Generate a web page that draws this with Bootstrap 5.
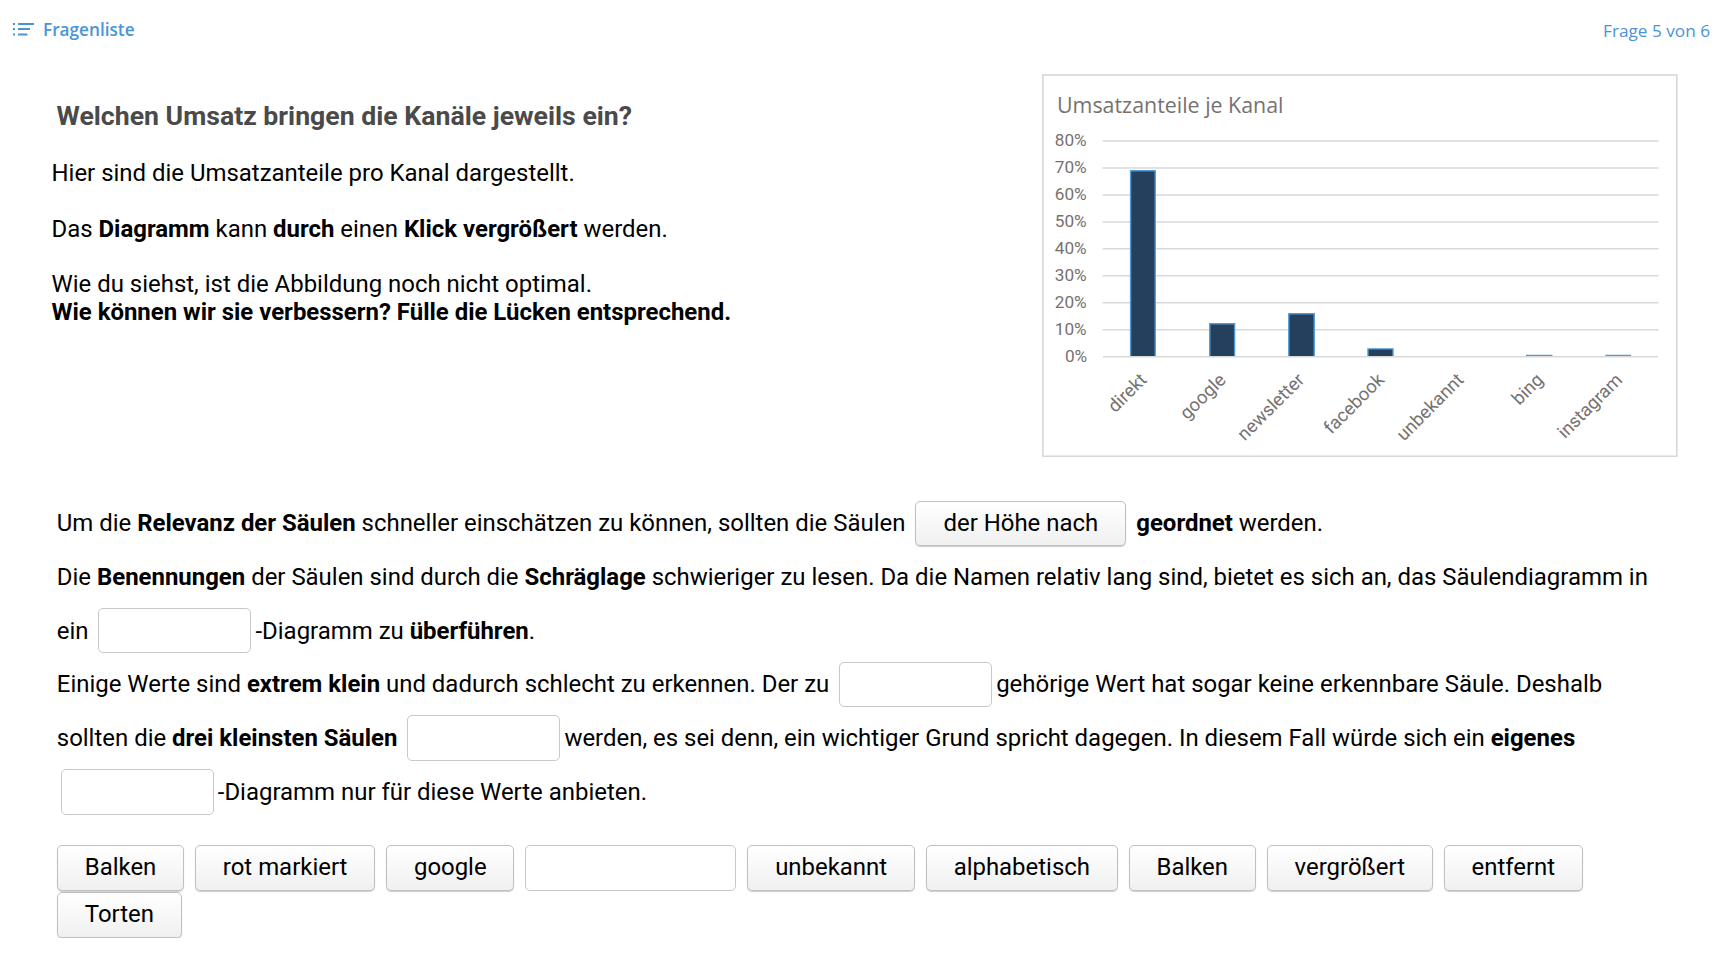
<!DOCTYPE html>
<html lang="de">
<head>
<meta charset="utf-8">
<meta name="viewport" content="width=device-width, initial-scale=1">
<title>Fragenliste</title>
<link href="https://cdn.jsdelivr.net/npm/bootstrap@5.3.0/dist/css/bootstrap.min.css" rel="stylesheet">
<style>
  body { font-family: Roboto, sans-serif; font-size: 23.94px; line-height: 28px; color: #000; background: #fff; }
  strong { font-weight: 700; }
  .topbar { height: 60px; padding: 17px 20px 0 12px; font-family: "Open Sans", sans-serif; font-size: 17.2px; line-height: 26px; }
  .topbar a, .topbar span { color: #4a94d6; }
  .topbar a { font-weight: 600; }
  .topbar svg { margin-top: -2px; }
  .counter { padding-top: 1px; }
  .intro { padding-left: 51.5px; padding-right: 52px; height: 437px; }
  .intro h1 { font-size: 26.65px; line-height: 32px; font-weight: 700; color: #4a4a4a; margin: 40px 0 27px 5px; }
  .intro p { margin-bottom: 27.6px; }
  .chart { margin-top: 14px; width: 636px; height: 383px; }
  .cloze { padding-left: 56.8px; line-height: 53.75px; white-space: nowrap; }
  .gap, .chip { display: inline-flex; align-items: center; justify-content: center; height: 46px; border: 1px solid #c8c8c8; border-radius: 5px; line-height: 44px; vertical-align: middle; background: #fff; }
  .gap { width: 153px; margin: 0 4px; }
  .cloze .chip { margin-bottom: 2px; }
  .cloze .gap { margin-bottom: 3px; }
  .cloze .chip, .cloze .gap { height: 45.5px; }
  .chip { padding: 0 26.75px 2px; border-color: #c0c0c0; background: linear-gradient(#fff, #f0f0f0); box-shadow: 0 1px 1px rgba(0,0,0,.2); white-space: nowrap; }
  .slot-wide { width: 211px; padding: 0 0 2px; }
  .slot-empty { background: #fff; box-shadow: none; border-color: #c8c8c8; }
  .bank { margin: 25px 120px 0 57px; column-gap: 11px; row-gap: 1px; }
</style>
</head>
<body>
<header class="topbar d-flex justify-content-between align-items-start">
  <a href="#" class="d-flex align-items-center text-decoration-none">
    <svg width="23" height="14" viewBox="0 0 23 14" fill="#4a94d6" class="me-2"><path d="M1 1h2v2H1zM6 1h16v2H6zM1 6h2v2H1zM6 6h12v2H6zM1 11.500h2v2H1zM6 11.500h9.500v2H6z"/></svg>
    <span>Fragenliste</span>
  </a>
  <span class="counter">Frage 5 von 6</span>
</header>

<main>
  <section class="intro d-flex justify-content-between align-items-start">
    <div>
      <h1>Welchen Umsatz bringen die Kanäle jeweils ein?</h1>
      <p>Hier sind die Umsatzanteile pro Kanal dargestellt.</p>
      <p>Das <strong>Diagramm</strong> kann <strong>durch</strong> einen <strong>Klick vergrößert</strong> werden.</p>
      <p>Wie du siehst, ist die Abbildung noch nicht optimal.<br><strong>Wie können wir sie verbessern? Fülle die Lücken entsprechend.</strong></p>
    </div>
    <svg class="chart" viewBox="1042 74 636 383" font-family="Roboto, sans-serif" font-size="17.200" fill="#767171">
      <rect x="1042.800" y="75" width="634" height="381.300" fill="#fff" stroke="#d9d9d9" stroke-width="1.700"/>
      <text x="1057" y="112.600" font-family="'Open Sans', sans-serif" font-size="21.500" textLength="226.500" lengthAdjust="spacingAndGlyphs">Umsatzanteile je Kanal</text>
      <path d="M1102.500 141H1658.500M1102.500 168H1658.500M1102.500 195H1658.500M1102.500 222H1658.500M1102.500 248.700H1658.500M1102.500 275.700H1658.500M1102.500 302.700H1658.500M1102.500 329.700H1658.500M1103 356.700H1658" stroke="#d9d9d9" stroke-width="1.600"/>
      <g text-anchor="end">
        <text x="1086.700" y="146">80%</text><text x="1086.700" y="173">70%</text><text x="1086.700" y="200">60%</text>
        <text x="1086.700" y="227">50%</text><text x="1086.700" y="254">40%</text><text x="1086.700" y="281">30%</text>
        <text x="1086.700" y="308">20%</text><text x="1086.700" y="335">10%</text><text x="1087.200" y="362">0%</text>
      </g>
      <g fill="#24405c" stroke="#4f9ad8" stroke-width="1.400">
        <path d="M1130.600 356V170.700H1155.200V356"/>
        <path d="M1209.800 356V323.800H1234.600V356"/>
        <path d="M1288.800 356V313.700H1314.200V356"/>
        <path d="M1368 356V348.900H1393V356"/>
        <path d="M1526 355.400H1552.500M1605.300 355.400H1631"/>
      </g>
      <g text-anchor="end" font-size="18.400">
        <text transform="translate(1147.800 381) rotate(-45)">direkt</text>
        <text transform="translate(1226.800 381) rotate(-45)">google</text>
        <text transform="translate(1305.300 381) rotate(-45)">newsletter</text>
        <text transform="translate(1385.300 381) rotate(-45)">facebook</text>
        <text transform="translate(1464.800 381) rotate(-45)">unbekannt</text>
        <text transform="translate(1544.300 381) rotate(-45)">bing</text>
        <text transform="translate(1623.300 381) rotate(-45)">instagram</text>
      </g>
    </svg>
  </section>

  <section class="cloze">
    <div>Um die <strong>Relevanz der Säulen</strong> schneller einschätzen zu können, sollten die Säulen <span class="chip slot-wide mx-1">der Höhe nach</span> <strong>geordnet</strong> werden.</div>
    <div>Die <strong>Benennungen</strong> der Säulen sind durch die <strong>Schräglage</strong> schwieriger zu lesen. Da die Namen relativ lang sind, bietet es sich an, das Säulendiagramm in</div>
    <div>ein <span class="gap"></span>-Diagramm zu <strong>überführen</strong>.</div>
    <div>Einige Werte sind <strong>extrem klein</strong> und dadurch schlecht zu erkennen. Der zu <span class="gap"></span>gehörige Wert hat sogar keine erkennbare Säule. Deshalb</div>
    <div>sollten die <strong>drei kleinsten Säulen</strong> <span class="gap"></span>werden, es sei denn, ein wichtiger Grund spricht dagegen. In diesem Fall würde sich ein <strong>eigenes</strong></div>
    <div><span class="gap"></span>-Diagramm nur für diese Werte anbieten.</div>
  </section>

  <section class="bank d-flex flex-wrap">
    <span class="chip">Balken</span>
    <span class="chip">rot markiert</span>
    <span class="chip">google</span>
    <span class="chip slot-wide slot-empty"></span>
    <span class="chip">unbekannt</span>
    <span class="chip">alphabetisch</span>
    <span class="chip">Balken</span>
    <span class="chip">vergrößert</span>
    <span class="chip">entfernt</span>
    <span class="chip">Torten</span>
  </section>
</main>
<script src="https://cdn.jsdelivr.net/npm/bootstrap@5.3.0/dist/js/bootstrap.bundle.min.js"></script>
</body>
</html>
